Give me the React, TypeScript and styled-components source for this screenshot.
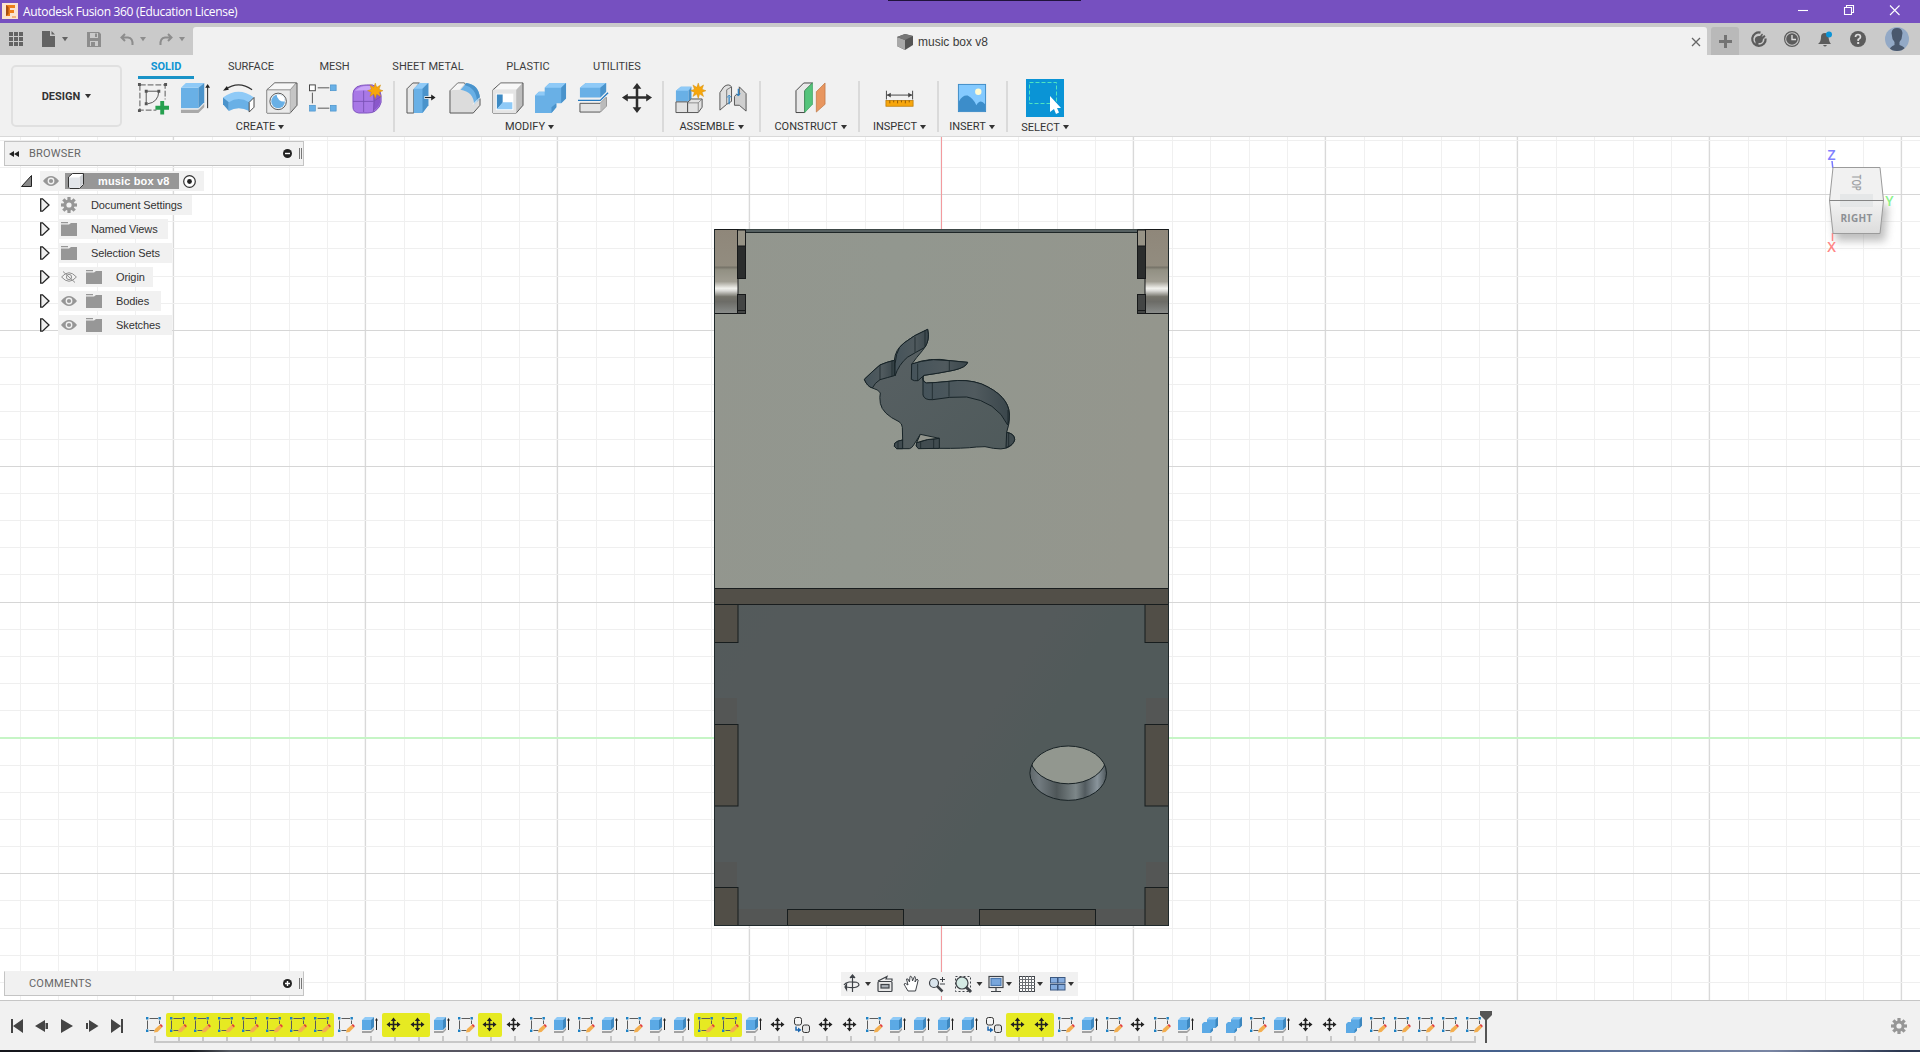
import React from 'react';
import styled, { createGlobalStyle } from 'styled-components';

const GlobalStyle = createGlobalStyle`
  * { box-sizing: border-box; }
  body { margin: 0; overflow: hidden; font-family: "Liberation Sans", Arial, sans-serif; color: #333; }
  svg { display: block; overflow: visible; }
`;

const narrow = 'Roboto, "Liberation Sans", sans-serif';

const Shell = styled.div`
  display: grid;
  grid-template-rows: 23px 32px 82px 863px 50px 2px;
  width: 1920px;
  height: 1052px;
  background: #f1f1f1;
`;

/* ---------- title bar ---------- */
const TitleBar = styled.header`
  display: grid;
  grid-template-columns: 888px 193px 1fr;
  background: #7650c0;
`;
const AppTitle = styled.div`
  display: flex;
  align-items: center;
  gap: 5px;
  padding: 0 0 0 2px;
  font: 12px "Open Sans", "Noto Sans", sans-serif;
  letter-spacing: -0.32px;
  color: #fff;
`;
const AppLogo = styled.svg`
  margin-top: -2px;
`;
const Handle = styled.div`
  height: 1px;
  background: #20133c;
`;
const WindowButtons = styled.div`
  display: flex;
  justify-content: flex-end;
  gap: 29px;
  padding: 2px 16px 0 0;
`;

/* ---------- document strip ---------- */
const DocStrip = styled.div`
  display: grid;
  grid-template-columns: 193px 1514px 1fr;
  background: #cacaca;
`;
const QuickAccess = styled.div`
  display: flex;
  align-items: center;
  padding: 0 0 0 8px;
  color: #666;
`;
const Slot = styled.span<{ $w: number; $faded?: boolean }>`
  width: ${p => p.$w}px;
  flex: none;
  color: ${p => (p.$faded ? '#8d8d8d' : '#636363')};
`;
const DocTab = styled.div`
  display: grid;
  grid-template-columns: 704px 1fr 25px;
  align-items: center;
  margin-top: 4px;
  border-radius: 3px 3px 0 0;
  background: #f1f1f1;
  font-size: 12px;
  color: #3c3c3c;
`;
const DocName = styled.div`
  grid-column: 2;
  display: flex;
  align-items: center;
  gap: 5px;
  padding-top: 1px;
`;
const CloseTab = styled.svg`
  margin: 1px 0 0 9px;
`;
const StripRight = styled.div`
  display: flex;
  align-items: center;
  padding-left: 4px;
`;
const NewTab = styled.div`
  display: grid;
  place-items: center;
  align-self: end;
  width: 28px;
  height: 28px;
  margin-right: 12px;
  border-radius: 3px 3px 0 0;
  background: #b9b9b9;
`;

/* ---------- ribbon ---------- */
const Ribbon = styled.div`
  display: flex;
  border-bottom: 1px solid #d9d9d9;
  background: #f1f1f1;
`;
const Workspace = styled.div`
  display: flex;
  align-items: center;
  justify-content: center;
  gap: 5px;
  width: 111px;
  height: 62px;
  margin: 10px 7px 0 11px;
  border: 2px solid #e0e0e0;
  border-radius: 5px;
  font: bold 11px ${narrow};
`;
const RibbonBody = styled.div`
  flex: 1;
`;
const Tabs = styled.nav`
  display: flex;
  gap: 0;
  height: 24px;
`;
const Tab = styled.div<{ $w: number; $active?: boolean }>`
  display: flex;
  align-items: center;
  justify-content: center;
  width: ${p => p.$w}px;
  padding: 0 0 2px;
  font: ${p => (p.$active ? 'bold' : 'normal')} 11px ${narrow};
  color: ${p => (p.$active ? '#0f94d2' : '#3c3c3c')};
`;
const ActiveTab = styled(Tab)`
  margin: 0 5px 0 9px;
  border-bottom: 3px solid #1a93c7;
  padding: 1px 0 0;
`;
const Groups = styled.div`
  display: flex;
  height: 57px;
`;
const Group = styled.section<{ $w: number; $shift?: number; $last?: boolean }>`
  display: flex;
  flex-direction: column;
  align-items: center;
  width: ${p => p.$w}px;
  padding-right: ${p => p.$shift ?? 0}px;
  background: ${p => (p.$last ? 'none' : 'linear-gradient(#dadada, #dadada) right 0 top 2px / 2px 51px no-repeat')};
`;
const Icons = styled.div`
  display: flex;
  align-items: center;
  gap: 11px;
  height: 38px;
`;
const GroupLabel = styled.div`
  display: flex;
  align-items: center;
  gap: 3px;
  height: 20px;
  padding-top: 1px;
  font: 11px ${narrow};
  color: #333;
`;
const SelectTile = styled.div`
  width: 38px;
  height: 38px;
  background: #0a94d6;
`;

/* ---------- viewport ---------- */
const Viewport = styled.main`
  display: grid;
  grid-template: 863px / 1920px;
  overflow: hidden;
  background: #fff;
  & > * { grid-area: 1 / 1; }
`;
const LeftDock = styled.div`
  display: flex;
  flex-direction: column;
  justify-content: space-between;
  z-index: 1;
  width: 304px;
  padding: 4px 0 4px 4px;
`;
const PanelHead = styled.div<{ $closed?: boolean }>`
  display: flex;
  align-items: center;
  height: 25px;
  padding: 0 1px 0 4px;
  border: 1px solid #c4c4c4;
  border-top-color: ${p => (p.$closed ? '#f1f1f1' : '#c4c4c4')};
  background: #f1f1f1;
  font: 11px ${narrow};
  letter-spacing: 0.2px;
  color: #666;
`;
const PanelName = styled.span`
  flex: 1;
  padding-left: 8px;
`;
const Grip = styled.span`
  width: 3px;
  height: 11px;
  margin-left: 7px;
  border-left: 1px solid #777;
  border-right: 1px solid #777;
`;
const Tree = styled.div`
  display: flex;
  flex-direction: column;
  gap: 4px;
  padding-top: 5px;
`;
const TreeRow = styled.div<{ $indent: number }>`
  display: flex;
  align-items: center;
  gap: 8px;
  height: 20px;
  padding-left: ${p => p.$indent}px;
`;
const Chip = styled.div<{ $w: number }>`
  display: flex;
  align-items: center;
  width: ${p => p.$w}px;
  height: 20px;
  padding-left: 3px;
  gap: 9px;
  background: #f1f1f1;
  font-size: 11px;
  letter-spacing: -0.1px;
  color: #333;
  white-space: nowrap;
`;
const ChipText = styled.span`
  padding-left: 5px;
`;
const RootName = styled.div`
  display: flex;
  align-items: center;
  gap: 14px;
  width: 114px;
  height: 16px;
  margin-left: -3px;
  padding-left: 3px;
  background: #979797;
  font-weight: bold;
  letter-spacing: 0.15px;
  color: #fff;
`;
const Target = styled.span`
  margin-left: -5px;
`;
const NavBar = styled.div`
  display: flex;
  align-items: center;
  align-self: end;
  z-index: 1;
  width: 237px;
  height: 24px;
  margin: 0 0 4px 841px;
  background: #f1f1f1;
`;

/* ---------- timeline ---------- */
const Timeline = styled.footer`
  display: flex;
  align-items: flex-start;
  border-top: 1px solid #c6c6c6;
  background: #f1f1f1;
`;
const Playback = styled.div`
  display: flex;
  gap: 9px;
  width: 142px;
  padding: 17px 0 0 9px;
`;
const Track = styled.div`
  display: flex;
  padding-top: 12px;
`;
const Step = styled.div<{ $first?: boolean; $last?: boolean }>`
  width: 24px;
  height: 30px;
  background:
    linear-gradient(#c8c8c8, #c8c8c8) 12px 23px / 2px 6px no-repeat,
    linear-gradient(#c8c8c8, #c8c8c8) ${p => (p.$first ? '12px' : '0')} 28px / ${p => (p.$last ? '14px' : '24px')} 2px no-repeat;
`;
const StepFace = styled.div<{ $hot?: boolean; $l?: boolean; $r?: boolean }>`
  display: grid;
  place-items: center;
  height: 24px;
  border-radius: ${p => (p.$l ? 2 : 0)}px ${p => (p.$r ? 2 : 0)}px ${p => (p.$r ? 2 : 0)}px ${p => (p.$l ? 2 : 0)}px;
  background: ${p => (p.$hot ? '#e6ea22' : 'transparent')};
`;
const Marker = styled.div`
  margin: 10px 0 0 -6px;
`;
const Settings = styled.div`
  margin: 17px 13px 0 auto;
`;
const Taskbar = styled.div`
  background: linear-gradient(90deg, #15171c 0 190px, #555a63 230px, #58515f 700px, #4b536e 1250px, #45618d 1500px, #7a86a4 1770px, #2b3750 1900px);
`;

/* ---------- icons ---------- */
const Caret = ({ c = '#333', s = 6 }: { c?: string; s?: number }) => (
  <svg width={s} height={s * 0.7} viewBox="0 0 6 4" preserveAspectRatio="none"><path d="M0 0H6L3 4Z" fill={c} /></svg>
);

const Gear = () => (
  <svg width="16" height="16" viewBox="0 0 16 16">
    <g fill="#969696">
      {[0, 45, 90, 135].map(a => <rect key={a} x="6.4" y="0" width="3.2" height="16" transform={`rotate(${a} 8 8)`} />)}
      <circle cx="8" cy="8" r="5.6" />
    </g>
    <circle cx="8" cy="8" r="2.6" fill="#f1f1f1" />
  </svg>
);

const Eye = ({ off }: { off?: boolean }) => (
  <svg width="16" height="12" viewBox="0 0 16 12">
    {off ? (
      <g fill="none" stroke="#8f8f8f">
        <path d="M.6 6Q8-2.500 15.400 6Q8 14.500 .6 6Z" /><circle cx="8" cy="6" r="2.600" /><path d="M2 .5L14 11.500" />
      </g>
    ) : (
      <>
        <path d="M0 6Q8-4 16 6Q8 16 0 6Z" fill="#969696" /><circle cx="8" cy="6" r="3.400" fill="#f1f1f1" /><circle cx="8" cy="6" r="2.100" fill="#969696" />
      </>
    )}
  </svg>
);

const Folder = () => (
  <svg width="16" height="14" viewBox="0 0 16 14" fill="#979797">
    <path d="M0 0H7V1.200H0ZM0 2.500H8L10 1H16V14H0Z" />
  </svg>
);

const CubeMini = () => (
  <svg width="16" height="16" viewBox="0 0 16 16" stroke="#333" strokeWidth="1" strokeLinejoin="round">
    <path d="M.5 4L4.500 .5H15.500V11.500L11.500 15.500H2L.5 14Z" fill="#fff" />
    <path d="M1 4.500H11V15H2L1 14Z" fill="#e3e6ea" stroke="none" /><path d="M11.500 4L15 1V11L11.500 15Z" fill="#cdd0d4" stroke="none" />
  </svg>
);

const ribbonArt: Record<string, React.ReactNode> = {
  sketch: (
    <>
      <path d="M3 3H29V18M3 3V29H20" fill="none" stroke="#555" strokeDasharray="6 2" />
      <path d="M9.500 9.500H22.500M9.500 9.500V22.500M22.500 9.500Q22 21 11 22.500" fill="none" stroke="#555" />
      <path d="M1 1h3v3h-3zM28 1h3v3h-3zM1 28h3v3h-3zM8 8h3v3h-3zM21 8h3v3h-3zM8 21h3v3h-3z" fill="#555" />
      <path d="M24 19.500h4v5h5v4h-5v5h-4v-5h-5v-4h5z" fill="#26a04f" />
    </>
  ),
  extrude: (
    <>
      <path d="M1 28H19L25 22V26L19 32H1Z" fill="#a9a9a9" /><path d="M1 28H19L25 22" fill="none" stroke="#eee" />
      <path d="M1 6H19V27H1Z" fill="#69b0e6" /><path d="M1 6L6 1H25L19 6Z" fill="#8fcaf7" /><path d="M19 6L25 1V21L19 27Z" fill="#4a93cb" />
      <path d="M28.500 27V5" stroke="#222" /><path d="M26 6L28.500 2L31 6Z" fill="#222" />
    </>
  ),
  revolve: (
    <>
      <path d="M2 8Q16-2 30 8" fill="none" stroke="#333" strokeWidth="1.200" /><path d="M0 9L4 4L6 8Z" fill="#222" />
      <path d="M0 16Q16 4 32 16L27 22Q16 15 6 22Z" fill="#8fcaf7" /><path d="M0 16L6 21V30L0 23Z" fill="#4a93cb" /><path d="M6 21Q16 14 27 21V30Q16 24 6 30Z" fill="#69b0e6" />
      <path d="M27 21L32 16V26L27 31Z" fill="#fff" stroke="#444" />
    </>
  ),
  hole: (
    <>
      <path d="M1 8L9 1H32V24L25 32H1Z" fill="#c5c5c5" stroke="#555" /><path d="M1 8H25V32H1Z" fill="#eaeaea" stroke="#999" strokeWidth=".6" />
      <path d="M1 8L9 1H31L25 8Z" fill="#f7f7f7" stroke="#666" strokeWidth=".6" /><circle cx="12.500" cy="20" r="8.500" fill="#f5f5f5" stroke="#555" />
      <circle cx="12.500" cy="20" r="7" fill="#69b0e6" /><path d="M11 13A7 7 0 0 0 19.500 20Q20 13 11 13Z" fill="#fff" />
    </>
  ),
  pattern: (
    <>
      <path d="M9 6H21M3.500 11V22M9 27H21" stroke="#555" /><rect x=".5" y="3" width="6" height="6" fill="#fff" stroke="#444" />
      <rect x="22" y="3" width="6" height="6" fill="#69b0e6" stroke="#3f8cc6" strokeWidth=".6" /><rect x=".5" y="24" width="6" height="6" fill="#69b0e6" stroke="#3f8cc6" strokeWidth=".6" /><rect x="22" y="24" width="6" height="6" fill="#69b0e6" stroke="#3f8cc6" strokeWidth=".6" />
    </>
  ),
  form: (
    <>
      <path d="M1 12Q1 8 5 5Q9 3 15 3H21Q29 6 30 14V21Q29 26 24 30Q21 32 16 32H7Q1 31 1 26Z" fill="#a878e6" stroke="#7e52bd" />
      <path d="M3 9Q8 4 15 4H20L22 9Q12 8 3 9Z" fill="#c9a5f7" /><path d="M22 11L29 11V21Q28 26 22 30Z" fill="#8a58cb" /><path d="M12 9V31M1 20H22L30 15M22 9Q24 20 22 31" fill="none" stroke="#7a50b4" strokeWidth=".9" />
    </>
  ),
  star: <path d="M24 0L25.500 4.500L29.500 2L28 6.500L32 8L28 9.500L29.500 14L25.500 11.500L24 16L22.500 11.500L18.500 14L20 9.500L16 8L20 6.500L18.500 2L22.500 4.500Z" fill="#f7a60c" stroke="#c98709" strokeWidth=".4" />,
  press: (
    <>
      <path d="M1 7L7 1H14L8 8V32H1Z" fill="#e6e6e6" stroke="#555" /><path d="M8 7L14 1H23V24L17 32H8Z" fill="#69b0e6" /><path d="M8 7L14 1H23L17 7Z" fill="#8fcaf7" /><path d="M17 7L23 1V24L17 32Z" fill="#4a93cb" />
      <path d="M19 16H27" stroke="#fff" strokeWidth="3" /><path d="M19.500 16H27" stroke="#222" strokeWidth="1.300" /><path d="M26 13L30.500 16L26 19Z" fill="#222" />
    </>
  ),
  fillet: (
    <>
      <path d="M1 9L9 1H16L25 15L32 17V24L25 32H1Z" fill="#dcdcdc" stroke="#555" strokeLinejoin="round" /><path d="M1.500 9L9 1.500H16L11 8Q3 8 1.500 9Z" fill="#f5f5f5" />
      <path d="M12 8L18 1Q31 3 32 17L26 23Q25 10 12 8Z" fill="#69b0e6" /><path d="M18 1Q31 3 32 17L29 20Q28 6 16 3Z" fill="#4a93cb" /><path d="M25 23L32 16" stroke="#fff" />
    </>
  ),
  shell: (
    <>
      <path d="M1 8L9 1H32V24L25 32H1Z" fill="#bdbdbd" stroke="#555" /><path d="M1 8H25V32H1Z" fill="#e5e5e5" /><path d="M2 8L9 1.500H31L25 8Z" fill="#f8f8f8" />
      <rect x="4" y="12" width="18" height="17" fill="#fff" /><path d="M5 13H11V22L5 28Z" fill="#3d8ac4" /><path d="M11 21H21V28H5Z" fill="#8fcaf7" />
    </>
  ),
  combine: (
    <>
      <path d="M0 14L4 10H10V6L15 1H32V17L27 22H22V26L17 32H0Z" fill="#69b0e6" /><path d="M10 6L15 1H32L27 6ZM0 14L4 10H10V14Z" fill="#8fcaf7" /><path d="M27 6L32 1V17L27 22ZM17 26L22 22V26L17 32Z" fill="#4a93cb" />
    </>
  ),
  split: (
    <>
      <path d="M2 6L8 1H29V10L23 16H2Z" fill="#69b0e6" /><path d="M2 6L8 1H29L23 6Z" fill="#8fcaf7" /><path d="M23 6L29 1V10L23 16Z" fill="#4a93cb" />
      <path d="M0 19H23L31 11" fill="none" stroke="#2279c0" strokeWidth="1.400" /><path d="M2 22H23L29 16V25L23 31H2Z" fill="#e3e3e3" stroke="#555" strokeWidth="1" /><path d="M23 22L29 16V25L23 31Z" fill="#bbb" />
    </>
  ),
  move: <path d="M16.500 1L21 7H17.800V14.700H26V12L32 16L26 20V17.300H17.800V26H21L16.500 32L12 26H15.200V17.300H7V20L1 16L7 12V14.700H15.200V7H12Z" fill="#2d2d2d" />,
  newComponent: (
    <>
      <path d="M2 9L7 5H18L15 9V20H2Z" fill="#69b0e6" /><path d="M2 9L7 5H18L15 9Z" fill="#8fcaf7" /><path d="M15 9L18 5V17L15 20Z" fill="#4a93cb" />
      <path d="M2 20.500H14V31.500H2ZM14 21L18 17.500H29V26L25 31.500H14Z" fill="#e2e2e2" stroke="#555" /><path d="M14 21.500H25L29 17.500M25 21.500V31" fill="none" stroke="#777" strokeWidth=".8" />
    </>
  ),
  joint: (
    <>
      <path d="M3 11L7 5Q12 1 15 5V20L10 23L3 29Z" fill="#e0e0e0" stroke="#555" /><path d="M10 8V23M10 8L15 5" stroke="#777" fill="none" /><path d="M18 15Q19 12 23 13V5L30 12V30L23 24H18Z" fill="#cfcfcf" stroke="#555" />
      <path d="M12.500 15V23M22 7V14" stroke="#2c82c4" strokeWidth="1.300" /><path d="M10.500 16L12.500 13.500L14.500 16M20 12L22 14.500L24 12" fill="none" stroke="#2c82c4" />
    </>
  ),
  construct: (
    <>
      <path d="M1 9L9 1H18L10 9V31.500H1Z" fill="#e8e8e8" stroke="#444" /><path d="M10 9L18 1V23L10 31.500Z" fill="#55c47b" stroke="#389f5a" strokeWidth=".7" /><path d="M22 10L31 1V23L22 31Z" fill="#e8965f" stroke="#bd723f" strokeWidth=".7" />
    </>
  ),
  inspect: (
    <>
      <path d="M2.500 9V18M29.500 9V18M3 13.500H29" stroke="#444" /><path d="M3 13.500L7 11V16ZM29 13.500L25 11V16Z" fill="#444" /><rect x="2" y="19" width="28" height="6" fill="#f7a60c" stroke="#bd7c08" strokeWidth=".8" />
      <path d="M6 19V22M10 19V21M14 19V22M18 19V21M22 19V22M26 19V21" stroke="#865200" strokeWidth=".9" />
    </>
  ),
  insert: (
    <>
      <rect x="2.500" y="2.500" width="28" height="28" fill="#84caff" stroke="#3f8cc6" /><circle cx="23" cy="10" r="3.300" fill="#fffbd2" /><path d="M3 20Q7 13 12 14Q18 17 21 24Q25 17 30 23V30H3Z" fill="#3c8dca" />
    </>
  ),
};
const Art = ({ name, size = 32 }: { name: string; size?: number }) => (
  <svg width={size} height={size} viewBox="0 0 33 33">
    {ribbonArt[name]}
    {name === 'form' && <g transform="translate(0 1)">{ribbonArt.star}</g>}
    {name === 'newComponent' && <g transform="translate(1 1)">{ribbonArt.star}</g>}
  </svg>
);

const stepArt: Record<string, React.ReactNode> = {
  S: (
    <>
      <path d="M4.500 2.500H13M2.500 4.500V13M4.500 14.500H9.500M14.500 4.500V8" fill="none" stroke="#5c5c5c" /><path d="M1 1h2.400v2.400h-2.400zM13.500 1h2.400v2.400h-2.400zM1 13.500h2.400v2.400h-2.400z" fill="#1d81c4" />
      <path d="M9 16.500L10 13L14.500 9L17 11.500L12.500 16Z" fill="#f4af4f" /><path d="M14.500 9L16 8L17.800 10L17 11.500Z" fill="#e23b3b" />
    </>
  ),
  E: (
    <>
      <path d="M1 15H10L13 12V14L10 17H1Z" fill="#a2a2a2" /><path d="M1 4H10V14H1Z" fill="#5ba9e5" /><path d="M1 4L4 1H13L10 4Z" fill="#8fcaf7" /><path d="M10 4L13 1V11L10 14Z" fill="#3d87bf" />
      <path d="M15.500 14V4" stroke="#222" /><path d="M14 4.500L15.500 2L17 4.500Z" fill="#222" />
    </>
  ),
  M: <path d="M8.500 1.500L11.200 5H9.300V7.700H12V5.800L15.500 8.500L12 11.200V9.300H9.300V12H11.200L8.500 15.500L5.800 12H7.700V9.300H5V11.200L1.500 8.500L5 5.800V7.700H7.700V5H5.800Z" fill="#222" />,
  J: (
    <>
      <path d="M1 8L3 6H6V3.500L8.500 1H17V9.500L14.500 12H12V14.500L9.500 17H1Z" fill="#5ba9e5" /><path d="M6 3.500L8.500 1H17L14.500 3.500Z" fill="#8fcaf7" /><path d="M14.500 3.500L17 1V9.500L14.500 12ZM9.500 14L12 12V14.500L9.500 17Z" fill="#3d87bf" />
    </>
  ),
  C: (
    <>
      <rect x="1.500" y="1.500" width="7" height="7.500" rx="2" fill="#f4f4f4" stroke="#333" /><rect x="9.500" y="9" width="7" height="7.500" rx="2" fill="#e4e4e4" stroke="#333" /><path d="M3 10.500V14H6" fill="none" stroke="#1c67b0" strokeWidth="1.500" /><path d="M5 11.500L8.500 14L5 16.500Z" fill="#1c67b0" />
    </>
  ),
};
const hot = (s: string) => s.split('').map(k => ({ k, h: true }));
const cold = (s: string) => s.split('').map(k => ({ k, h: false }));
const steps = [
  ...cold('S'), ...hot('SSSSSSS'), ...cold('SE'), ...hot('MM'), ...cold('ES'), ...hot('M'), ...cold('MSESESEE'), ...hot('SS'),
  ...cold('EMCMMSEEEEC'), ...hot('MM'), ...cold('SESMSEJJSEMMJSSSSS'),
];

const groups: { label: string; w: number; icons: string[]; shift?: number; last?: boolean }[] = [
  { label: 'CREATE', w: 266, icons: ['sketch', 'extrude', 'revolve', 'hole', 'pattern', 'form'], shift: 4 },
  { label: 'MODIFY', w: 269, icons: ['press', 'fillet', 'shell', 'combine', 'split', 'move'] },
  { label: 'ASSEMBLE', w: 97, icons: ['newComponent', 'joint'], shift: 2 },
  { label: 'CONSTRUCT', w: 99, icons: ['construct'] },
  { label: 'INSPECT', w: 79, icons: ['inspect'] },
  { label: 'INSERT', w: 69, icons: ['insert'], shift: 3 },
  { label: 'SELECT', w: 74, icons: ['select'], last: true },
];

const tabs: [string, number][] = [['SURFACE', 104], ['MESH', 63], ['SHEET METAL', 124], ['PLASTIC', 76], ['UTILITIES', 102]];

const treeRows = [
  { label: 'Document Settings', w: 134, kind: 'gear' },
  { label: 'Named Views', w: 110, kind: 'folder' },
  { label: 'Selection Sets', w: 114, kind: 'folder' },
  { label: 'Origin', w: 95, kind: 'hidden' },
  { label: 'Bodies', w: 103, kind: 'visible' },
  { label: 'Sketches', w: 114, kind: 'visible' },
];

/* ---------- 3D scene ---------- */
const range = (a: number, b: number) => Array.from({ length: b - a + 1 }, (_, i) => a + i);

const Rabbit = () => (
  <g transform="translate(700 220) scale(.33333)" stroke="#172327" strokeWidth="3" strokeLinejoin="round">
    <path
      fill="url(#floor)"
      d="M493 478Q515 456 540 435Q560 426 583 421Q586 388 612 369Q640 346 683 328Q692 362 668 391Q648 414 635 433Q690 410 750 422Q780 425 803 427Q799 442 760 451Q710 461 672 466Q663 480 679 489Q710 488 747 484Q800 476 845 492Q926 527 928 582Q930 610 920 637Q944 641 944 659Q941 675 920 684Q905 689 880 685Q855 677 830 681Q790 686 718 685H655Q645 679 650 668L661 643L641 675Q635 685 628 686H590Q579 680 584 670Q591 662 608 660L607 622Q606 610 597 605Q547 582 541 550Q538 530 541 519Q537 509 517 504Q501 499 493 478Z"
    />
    <path d="M493 478Q515 456 540 435Q560 426 583 421L583 467Q565 472 540 479Q525 488 517 504Q501 499 493 478Z" fill="url(#wall)" />
    <path d="M585 468Q581 388 612 369Q640 346 683 328Q690 358 675 382Q645 398 622 412Q596 434 585 468Z" fill="url(#wall)" />
    <path d="M635 432Q660 423 700 419L750 422L803 427Q799 442 760 451Q710 461 672 466L654 482Q642 484 634 478Z" fill="url(#wall)" />
    <path d="M669 472Q667 485 679 489Q710 488 747 484Q800 476 845 492Q926 527 928 582Q929 603 923 615Q890 545 800 531Q750 529 698 539Q673 541 669 525Z" fill="url(#wall)" />
    <path d="M920 637Q944 641 944 659Q941 675 918 683ZM590 686Q579 680 584 670Q591 662 608 660V686ZM655 686Q645 679 650 668Q680 656 718 655V685Z" fill="#414c50" />
    <path d="M661 643L718 655Q680 656 650 668Z" fill="#92958d" />
    <path d="M540 435V479M576 422V468M645 350V397M675 332V380M653 431V482M748 422V452M697 489V539M747 484V530M924 570V610M926 639V680M594 664V686M662 666V685M701 657V685" fill="none" strokeWidth="2.200" />
  </g>
);

const Hinge = () => (
  <g stroke="#17191a">
    <rect x="714.500" y="229.500" width="23.500" height="84" fill="url(#hinge)" />
    <rect x="737.500" y="230" width="8" height="17" fill="#979386" />
    <rect x="737.500" y="246" width="8" height="32.500" fill="#2b2d2d" />
    <rect x="737.500" y="294.500" width="8" height="19" fill="#434544" />
    <path d="M738 310.500H746" />
  </g>
);

const Scene = () => (
  <svg width="1920" height="863" viewBox="0 137 1920 863">
    <defs>
      <linearGradient id="hinge" x1="0" y1="0" x2="0" y2="1">
        <stop offset="0" stopColor="#8f877a" /><stop offset=".43" stopColor="#928c7f" /><stop offset=".45" stopColor="#777469" /><stop offset=".48" stopColor="#929083" /><stop offset=".62" stopColor="#a19e93" />
        <stop offset=".7" stopColor="#f1f1ed" /><stop offset=".73" stopColor="#d9d9d5" /><stop offset=".8" stopColor="#74736a" /><stop offset=".86" stopColor="#6c6c67" /><stop offset="1" stopColor="#8b8e8c" />
      </linearGradient>
      <linearGradient id="lid" x1="0" y1="0" x2="1" y2=".1"><stop offset="0" stopColor="#93968e" /><stop offset=".4" stopColor="#92978f" /><stop offset="1" stopColor="#94968d" /></linearGradient>
      <linearGradient id="front" x1="0" y1="0" x2="1" y2="1"><stop offset=".1" stopColor="#515b5b" /><stop offset=".35" stopColor="#545a5b" /><stop offset=".65" stopColor="#545a5b" /><stop offset=".72" stopColor="#515a5a" /><stop offset="1" stopColor="#515a5a" /></linearGradient>
      <linearGradient id="floor" x1="0" y1="0" x2="1" y2="1"><stop offset="0" stopColor="#596164" /><stop offset="1" stopColor="#4f5a5b" /></linearGradient>
      <linearGradient id="wall" x1="0" y1="0" x2="1" y2="0"><stop offset="0" stopColor="#45535a" /><stop offset=".6" stopColor="#505a5e" /><stop offset="1" stopColor="#3a464b" /></linearGradient>
      <linearGradient id="bore"><stop offset="0" stopColor="#5f676a" /><stop offset=".12" stopColor="#727b80" /><stop offset=".35" stopColor="#4e5658" /><stop offset=".6" stopColor="#7d8789" /><stop offset=".72" stopColor="#525b5f" /><stop offset=".88" stopColor="#89949b" /><stop offset="1" stopColor="#4d565a" /></linearGradient>
      <linearGradient id="cubeFront" x1="0" y1="0" x2="0" y2="1"><stop offset="0" stopColor="#f3f3f3" /><stop offset="1" stopColor="#dcdcdc" /></linearGradient>
      <clipPath id="boreClip"><ellipse cx="1068.200" cy="773.200" rx="38.300" ry="27.200" /></clipPath>
      <filter id="soft" x="-30%" y="-30%" width="170%" height="170%"><feGaussianBlur stdDeviation="4" /></filter>
    </defs>

    {range(-25, 26).map(i => {
      const major = (i + 25) % 5 === 0;
      return <rect key={`v${i}`} x={Math.round(941.3 + i * 38.4) - (major ? 0.3 : 0)} y="137" width={major ? 1.4 : 1} height="863" fill={major ? '#d9d9d9' : '#f0f0f0'} />;
    })}
    {range(-22, 9).map(i => {
      const major = (i + 25) % 5 === 0;
      return <rect key={`h${i}`} x="0" y={Math.round(737.4 + i * 27.17)} width="1920" height="1" fill={major ? '#d6d6d6' : '#efefef'} />;
    })}
    <rect x="941" y="137" width="1" height="863" fill="#f39a9e" />
    <rect x="0" y="737" width="1920" height="2" fill="#c6f5c6" />

    <rect x="714.500" y="229.500" width="454" height="696" fill="url(#front)" />
    <path d="M714.500 229.500H1168.500V588.500H714.500Z" fill="url(#lid)" stroke="#27302f" />
    <rect x="745" y="229.500" width="393" height="2.500" fill="#566061" />
    <path d="M745.500 246V232.500H1137.500V246" fill="none" stroke="#1e2627" />
    <Hinge />
    <g transform="translate(1883 0) scale(-1 1)"><Hinge /></g>
    <Rabbit />

    <rect x="714.500" y="588.500" width="454" height="16" fill="#524f48" stroke="#191d1e" />
    <g fill="#545655">
      <rect x="715" y="698" width="22" height="26" /><rect x="1146" y="698" width="22" height="26" />
      <rect x="715" y="862" width="22" height="26" /><rect x="1146" y="862" width="22" height="26" />
      <rect x="738" y="909" width="407" height="16" />
    </g>
    <g fill="#514e47" stroke="#171d1e">
      {[714.5, 1145].map(x => (
        <React.Fragment key={x}>
          <rect x={x} y="604.500" width="23.500" height="38" /><rect x={x} y="724.500" width="23.500" height="81.500" /><rect x={x} y="887.500" width="23.500" height="38" />
        </React.Fragment>
      ))}
      <rect x="787.500" y="909.500" width="116" height="16" /><rect x="979.500" y="909.500" width="116" height="16" />
    </g>
    <ellipse cx="1068.200" cy="773.200" rx="38.300" ry="27.200" fill="url(#bore)" />
    <g clipPath="url(#boreClip)"><ellipse cx="1068.200" cy="756.600" rx="38.300" ry="27.200" fill="#92978f" stroke="#182225" /></g>
    <ellipse cx="1068.200" cy="773.200" rx="38.300" ry="27.200" fill="none" stroke="#182225" />
    <path d="M714.500 229V925.500H1168.500V229" fill="none" stroke="#1f292b" />

    <path d="M1833 205H1888L1885 241H1836Z" fill="#888" opacity=".55" filter="url(#soft)" />
    <path d="M1832 161L1832.800 168" stroke="#7777ff" strokeWidth="1.500" /><path d="M1832.500 233V241" stroke="#ff8787" strokeWidth="1.500" />
    <path d="M1833 167.500H1880L1883.500 200.500H1829.500Z" fill="#f1f1f1" stroke="#9b9b9b" />
    <path d="M1829.500 200.500H1883.500L1880 233.500H1833Z" fill="url(#cubeFront)" stroke="#9b9b9b" />
    <rect x="1840" y="194" width="33" height="13" fill="#e0e2e4" opacity=".7" />
    <path d="M1829.500 200.500H1883.500" stroke="#858585" />
    <g fontFamily='"Open Sans", "Noto Sans", sans-serif' textAnchor="middle">
      <text x="1831.500" y="159.500" fontSize="14" fontWeight="600" fill="#8080ff">Z</text>
      <text x="1831.500" y="251.500" fontSize="14" fontWeight="600" fill="#ff8585">X</text>
      <text x="1889.500" y="205.500" fontSize="14" fontWeight="600" fill="#8af28a">Y</text>
      <text x="1856.500" y="222" fontSize="10" fontWeight="bold" fill="#8d9095" letterSpacing=".3">RIGHT</text>
      <text transform="translate(1852 182.800) rotate(90) scale(.68 1)" fontSize="12" fontWeight="600" fill="#a0a2a5">TOP</text>
    </g>
  </svg>
);

/* ---------- navigation tools ---------- */
const NavTools = () => (
  <NavBar>
    <svg width="237" height="24" viewBox="0 0 237 24">
      <g fill="none" stroke="#3f4348" strokeWidth="1.200">
        <path d="M11.500 4V20M8 10Q18 9 18 13Q16 17 5 15M3 13Q4 11 8 10" /><path d="M9 6L11.500 3L14 6M5.500 12.500V17.500L4 15Z" fill="#3f4348" />
        <rect x="37" y="9.500" width="14" height="10" rx="1" fill="#e8e8e8" /><path d="M37 9L46 4.500L45 7H51V9" /><rect x="40" y="12.500" width="8" height="3.500" fill="#aab0b6" />
        <path d="M67 19Q64 14 63 12Q64 10.500 67 13L65.500 7Q67 5.500 68.500 10L69 4.500Q71 3 71.500 9L73.500 4.500Q75 4 74 10L76 7Q78 7 76.500 11L74.500 19Z" fill="#fff" strokeWidth="1" />
        <circle cx="93" cy="11" r="4.500" fill="#d9e4ec" /><path d="M99 7.500H104M101.500 5V10M99 12H104" strokeWidth="1" />
        <path d="M96 14L101.500 19.500" strokeWidth="2.500" />
        <path d="M114.500 4.500H129.500V19.500H114.500Z" strokeDasharray="2 2" strokeWidth="1" /><circle cx="121" cy="11" r="6" fill="#d4eae4" /><path d="M125 15L130 20" strokeWidth="3" />
        <rect x="148" y="4.500" width="14" height="11" fill="#fff" /><rect x="150" y="6.500" width="10" height="7" fill="#78a6dc" stroke="#4d7ab1" /><path d="M155 16V19M150 19.500H160" />
        <rect x="178.500" y="4.500" width="15" height="15" fill="#fff" strokeWidth="1" /><path d="M181.500 4V20M184.500 4V20M187.500 4V20M190.500 4V20M178 7.500H194M178 10.500H194M178 13.500H194M178 16.500H194" stroke="#6b6f74" strokeWidth="1" />
        <g fill="#86addf" stroke="#3c5981" strokeWidth="1"><rect x="209.500" y="5.500" width="7" height="5.500" /><rect x="217" y="5.500" width="7" height="5.500" /><rect x="209.500" y="12.500" width="7" height="5.500" /><rect x="217" y="12.500" width="7" height="5.500" /></g>
      </g>
      {[24, 135.500, 165, 196, 227].map(x => <path key={x} d={`M${x} 10h6l-3 4z`} fill="#333" />)}
    </svg>
  </NavBar>
);

export default function App() {
  return (
    <Shell>
      <GlobalStyle />
      <TitleBar>
        <AppTitle>
          <AppLogo width="16" height="16" viewBox="0 0 16 16">
            <rect width="16" height="16" fill="#fbe4d0" /><path d="M4 2H13V5H8V7H12V10H8V13H4Z" fill="#ef7e1a" /><path d="M4 2L6.500 4V11L4 13Z" fill="#a84e10" /><path d="M10 13H14V15H10Z" fill="#f5b57c" />
          </AppLogo>
          <span>Autodesk Fusion 360 (Education License)</span>
        </AppTitle>
        <Handle />
        <WindowButtons>
          {['M3 8.500H13', 'M3.500 5.500H10.500V12.500H3.500ZM5.500 5.500V3.500H12.500V10.500H10.500', 'M3 3.500L12.500 13M12.500 3.500L3 13'].map(d => (
            <svg key={d} width="17" height="16" viewBox="0 0 17 16"><path d={d} fill="none" stroke="#fff" strokeWidth="1.100" /></svg>
          ))}
        </WindowButtons>
      </TitleBar>

      <DocStrip>
        <QuickAccess>
          <Slot $w={34}><svg width="16" height="16" viewBox="0 0 16 16" fill="currentColor">{[1, 6, 11].flatMap(y => [1, 6, 11].map(x => <rect key={`${x}-${y}`} x={x} y={y} width="4" height="4" />))}</svg></Slot>
          <Slot $w={20}><svg width="14" height="16" viewBox="0 0 14 16"><path d="M0 0H8V5H13V16H0Z" fill="currentColor" /><path d="M9.500 0L13 3.500H9.500Z" fill="currentColor" /></svg></Slot>
          <Slot $w={25}><Caret c="#636363" s={6} /></Slot>
          <Slot $w={33} $faded><svg width="14" height="15" viewBox="0 0 14 15"><path d="M0 0H12L14 2V15H0Z" fill="currentColor" /><path d="M3 1H11V6H3ZM3 9H11V14H3Z" fill="#cacaca" /><path d="M8 1.500H10V5H8ZM4 10H8V14H4Z" fill="currentColor" /></svg></Slot>
          <Slot $w={20} $faded><svg width="14" height="13" viewBox="0 0 14 13"><path d="M5 1L1.500 4.500L5 8M2 4.500H8Q13 5 12.500 12" fill="none" stroke="currentColor" strokeWidth="2" /></svg></Slot>
          <Slot $w={19} $faded><Caret c="#8d8d8d" s={6} /></Slot>
          <Slot $w={20} $faded><svg width="14" height="13" viewBox="0 0 14 13"><path d="M9 1L12.500 4.500L9 8M12 4.500H6Q1 5 1.500 12" fill="none" stroke="currentColor" strokeWidth="2" /></svg></Slot>
          <Slot $w={10} $faded><Caret c="#8d8d8d" s={6} /></Slot>
        </QuickAccess>
        <DocTab>
          <DocName>
            <svg width="16" height="16" viewBox="0 0 16 16"><path d="M0 3L8 0L16 2V11L8 16L0 12Z" fill="#555" /><path d="M0 3L8 6V16L0 12Z" fill="#a8a8a8" /><path d="M0 3L8 0L16 2L8 6Z" fill="#777" /></svg>
            music box v8
          </DocName>
          <CloseTab width="10" height="10" viewBox="0 0 10 10"><path d="M1 1L9 9M9 1L1 9" stroke="#666" strokeWidth="1.300" /></CloseTab>
        </DocTab>
        <StripRight>
          <NewTab><svg width="13" height="13" viewBox="0 0 13 13"><path d="M5 0H8V5H13V8H8V13H5V8H0V5H5Z" fill="#737373" /></svg></NewTab>
          <Slot $w={33}><svg width="16" height="16" viewBox="0 0 16 16"><path d="M9.500 1.600A6.700 6.700 0 1 0 14.600 7.500" fill="none" stroke="#5c5c5c" strokeWidth="2.200" /><path d="M4.500 14V11Q3 8 5 6Q7 4.500 9 5L11 2.500L12 3.500L10.500 6L13.500 4L14.500 5.500L12 8Q12 11 9.500 12H7.500V14Z" fill="#5c5c5c" /></svg></Slot>
          <Slot $w={33}><svg width="16" height="16" viewBox="0 0 16 16"><circle cx="8" cy="8" r="7.400" fill="none" stroke="#5c5c5c" strokeWidth="1.200" /><circle cx="8" cy="8" r="5.800" fill="#5c5c5c" /><path d="M8 4V8.500H12" fill="none" stroke="#ddd" strokeWidth="1.400" /></svg></Slot>
          <Slot $w={33}><svg width="16" height="16" viewBox="0 0 16 16"><path d="M1 13Q4 11 4 6Q4 2 8 2Q11 2 11.500 6Q12 11 14 13ZM6 14H10Q8 17 6 14Z" fill="#5c5c5c" /><circle cx="12" cy="3.500" r="3" fill="#0c94d6" /></svg></Slot>
          <Slot $w={35}><svg width="16" height="16" viewBox="0 0 16 16"><circle cx="8" cy="8" r="8" fill="#5c5c5c" /><path d="M5.500 6Q5.500 3.500 8 3.500T10.500 6Q10.500 7.300 8.200 8.500V10" fill="none" stroke="#ddd" strokeWidth="1.700" /><rect x="7.200" y="11" width="2" height="2" fill="#ddd" /></svg></Slot>
          <svg width="24" height="24" viewBox="0 0 24 24"><clipPath id="face"><circle cx="12" cy="12" r="12" /></clipPath><g clipPath="url(#face)"><rect width="24" height="24" fill="#93a9c6" /><path d="M6.500 6Q7 1 12 1T17.500 6L16.500 12L14.500 15V18Q20 19.500 21 24H4Q5 19.500 9.500 18V15L7.500 12Z" fill="#4a586d" /></g></svg>
        </StripRight>
      </DocStrip>

      <Ribbon>
        <Workspace>DESIGN <Caret /></Workspace>
        <RibbonBody>
          <Tabs>
            <ActiveTab $w={56} $active>SOLID</ActiveTab>
            {tabs.map(([t, w]) => <Tab key={t} $w={w}>{t}</Tab>)}
          </Tabs>
          <Groups>
            {groups.map(g => (
              <Group key={g.label} $w={g.w} $shift={g.shift} $last={g.last}>
                <Icons>
                  {g.icons.map(n => n === 'select' ? (
                    <SelectTile key={n}>
                      <svg width="38" height="38" viewBox="0 0 38 38"><rect x="3.500" y="3.500" width="27" height="21" fill="none" stroke="#4fe3c1" strokeDasharray="4 2" /><path d="M24 17V33L28 30L30 35L33 33.500L31 29H35Z" fill="#fff" /></svg>
                    </SelectTile>
                  ) : <Art key={n} name={n} />)}
                </Icons>
                <GroupLabel>{g.label}<Caret /></GroupLabel>
              </Group>
            ))}
          </Groups>
        </RibbonBody>
      </Ribbon>

      <Viewport>
        <Scene />
        <LeftDock>
          <div>
            <PanelHead>
              <svg width="12" height="8" viewBox="0 0 12 8"><path d="M5 1V7L0 4ZM10 1V7L5 4Z" fill="#222" /></svg>
              <PanelName>BROWSER</PanelName>
              <svg width="9" height="9" viewBox="0 0 9 9"><circle cx="4.500" cy="4.500" r="4.500" fill="#222" /><path d="M2 4.500H7" stroke="#fff" strokeWidth="1.400" /></svg>
              <Grip />
            </PanelHead>
            <Tree>
              <TreeRow $indent={17}>
                <svg width="11" height="12" viewBox="0 0 11 12"><path d="M10.500 .5V11.500H.5Z" fill="#888" stroke="#222" /></svg>
                <Chip $w={164}>
                  <Eye />
                  <RootName><CubeMini />music box v8</RootName>
                  <Target><svg width="13" height="13" viewBox="0 0 13 13"><circle cx="6.500" cy="6.500" r="5.800" fill="#fff" stroke="#333" strokeWidth="1.200" /><circle cx="6.500" cy="6.500" r="2.400" fill="#222" /></svg></Target>
                </Chip>
              </TreeRow>
              {treeRows.map(r => (
                <TreeRow key={r.label} $indent={36}>
                  <svg width="10" height="14" viewBox="0 0 10 14"><path d="M.7 .8H2.500L9 7L2.500 13.200H.7Z" fill="#eee" stroke="#222" strokeWidth="1.300" /></svg>
                  <Chip $w={r.w}>
                    {r.kind === 'gear' ? <Gear /> : r.kind === 'folder' ? <Folder /> : <><Eye off={r.kind === 'hidden'} /><Folder /></>}
                    <ChipText>{r.label}</ChipText>
                  </Chip>
                </TreeRow>
              ))}
            </Tree>
          </div>
          <PanelHead $closed>
            <svg width="12" height="8" />
            <PanelName>COMMENTS</PanelName>
            <svg width="9" height="9" viewBox="0 0 9 9"><circle cx="4.500" cy="4.500" r="4.500" fill="#222" /><path d="M2 4.500H7M4.500 2V7" stroke="#fff" strokeWidth="1.400" /></svg>
            <Grip />
          </PanelHead>
        </LeftDock>
        <NavTools />
      </Viewport>

      <Timeline>
        <Playback>
          {['M2 1H4V15H2ZM14 1V15L4 8Z', 'M11 2V14L1 8ZM11.500 5H14V11H11.500Z', 'M2 1L14 8L2 15Z', 'M5 2V14L14.500 8ZM2 5H4V11H2Z', 'M2 1V15L12 8ZM12 1H14V15H12Z'].map(d => (
            <svg key={d} width="16" height="16" viewBox="0 0 16 16"><path d={d} fill="#444" /></svg>
          ))}
        </Playback>
        <Track>
          {steps.map((s, i) => (
            <Step key={i} $first={i === 0} $last={i === steps.length - 1}>
              <StepFace $hot={s.h} $l={!steps[i - 1]?.h} $r={!steps[i + 1]?.h}>
                <svg width="18" height="18" viewBox="0 0 18 18">{stepArt[s.k]}</svg>
              </StepFace>
            </Step>
          ))}
        </Track>
        <Marker><svg width="12" height="32" viewBox="0 0 12 32"><path d="M0 0H12V4L7 9V32H5V9L0 4Z" fill="#555" /></svg></Marker>
        <Settings><Gear /></Settings>
      </Timeline>
      <Taskbar />
    </Shell>
  );
}
